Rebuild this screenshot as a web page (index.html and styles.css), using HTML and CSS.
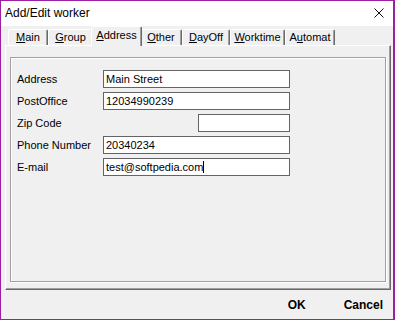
FILE: index.html
```html
<!DOCTYPE html>
<html>
<head>
    <title>Add/Edit worker</title>
    <link rel="stylesheet" href="styles.css">
</head>
<body>
<div class="window">

    <!-- title bar -->
    <div class="titlebar">
        <span class="title">Add/Edit worker</span>
        <svg class="close" width="10" height="10" viewBox="0 0 10 10">
            <path d="M0.5 0.5 L9.5 9.5 M9.5 0.5 L0.5 9.5" stroke="#111" stroke-width="1"/>
        </svg>
    </div>

    <!-- tabs -->
    <div class="tabs">
        <div class="tab tab-main"><u>M</u>ain</div>
        <div class="tab tab-group"><u>G</u>roup</div>
        <div class="tab tab-address active"><u>A</u>ddress</div>
        <div class="tab tab-other"><u>O</u>ther</div>
        <div class="tab tab-dayoff"><u>D</u>ayOff</div>
        <div class="tab tab-worktime"><u>W</u>orktime</div>
        <div class="tab tab-automat">A<u>u</u>tomat</div>
    </div>

    <!-- address page -->
    <div class="panel">
        <div class="group">
            <div class="row"><label>Address</label><div class="field">Main Street</div></div>
            <div class="row"><label>PostOffice</label><div class="field">12034990239</div></div>
            <div class="row"><label>Zip Code</label><div class="field zip"></div></div>
            <div class="row"><label>Phone Number</label><div class="field">20340234</div></div>
            <div class="row"><label>E-mail</label><div class="field"><span class="caret">test@softpedia.com</span></div></div>
        </div>
    </div>

    <div class="buttons">
        <span class="btn">OK</span>
        <span class="btn">Cancel</span>
    </div>
</div>
</body>
</html>
```

FILE: styles.css
```css
body { margin: 0; font-family: "Liberation Sans", Arial, sans-serif; font-size: 11px; color: #000; }

.window { width: 395px; height: 320px; box-sizing: border-box; border: 1px solid #9d1fa3; border-right-width: 2px; background: #f0f0f0; display: flex; flex-direction: column; }

/* title bar */
.titlebar { height: 24px; flex: none; background: #fff; display: flex; align-items: center; justify-content: space-between; padding: 0 9px 1px 4px; font-size: 12px; }

/* tabs */
.tabs { height: 19px; flex: none; display: flex; align-items: flex-end; padding-left: 7px; }
.tab { height: 16px; box-sizing: border-box; flex: none; text-align: center; border-top: 1px solid #fff; border-left: 1px solid #fff; border-right: 1px solid #696969; box-shadow: inset -1px 0 #a0a0a0; border-radius: 2px 2px 0 0; line-height: 15px; }
.tab.active { height: 20px; margin: 0 -2px -1px; position: relative; z-index: 1; background: #f0f0f0; line-height: 17px; }
.tab-main { width: 40px; }
.tab-group { width: 45px; }
.tab-address { width: 51px; }
.tab-other { width: 42px; }
.tab-dayoff { width: 48px; }
.tab-worktime { width: 55px; }
.tab-automat { width: 50px; }

/* page */
.panel { height: 245px; flex: none; box-sizing: border-box; margin: 0 2px 0 4px; border-top: 1px solid #fff; border-left: 1px solid #fff; border-right: 1px solid #696969; border-bottom: 1px solid #696969; box-shadow: inset -1px -1px #a0a0a0; padding: 11px 4px 7px 4px; }
.group { height: 100%; box-sizing: border-box; border: 1px solid #a0a0a0; box-shadow: inset 1px 1px #fff, 1px 1px #fff; padding: 12px 6px; display: flex; flex-direction: column; gap: 4px; }
.row { display: flex; align-items: center; height: 18px; }
.row label { width: 86px; flex: none; }
.field { width: 187px; height: 18px; box-sizing: border-box; border: 1px solid #646464; background: #fff; padding-left: 2px; line-height: 16px; white-space: nowrap; }
.field.zip { width: 92px; margin-left: 95px; }
.caret { border-right: 1px solid #000; }

/* buttons */
.buttons { flex: 1; display: flex; justify-content: flex-end; align-items: center; gap: 38px; padding-right: 10px; font-size: 12px; font-weight: bold; }
```
